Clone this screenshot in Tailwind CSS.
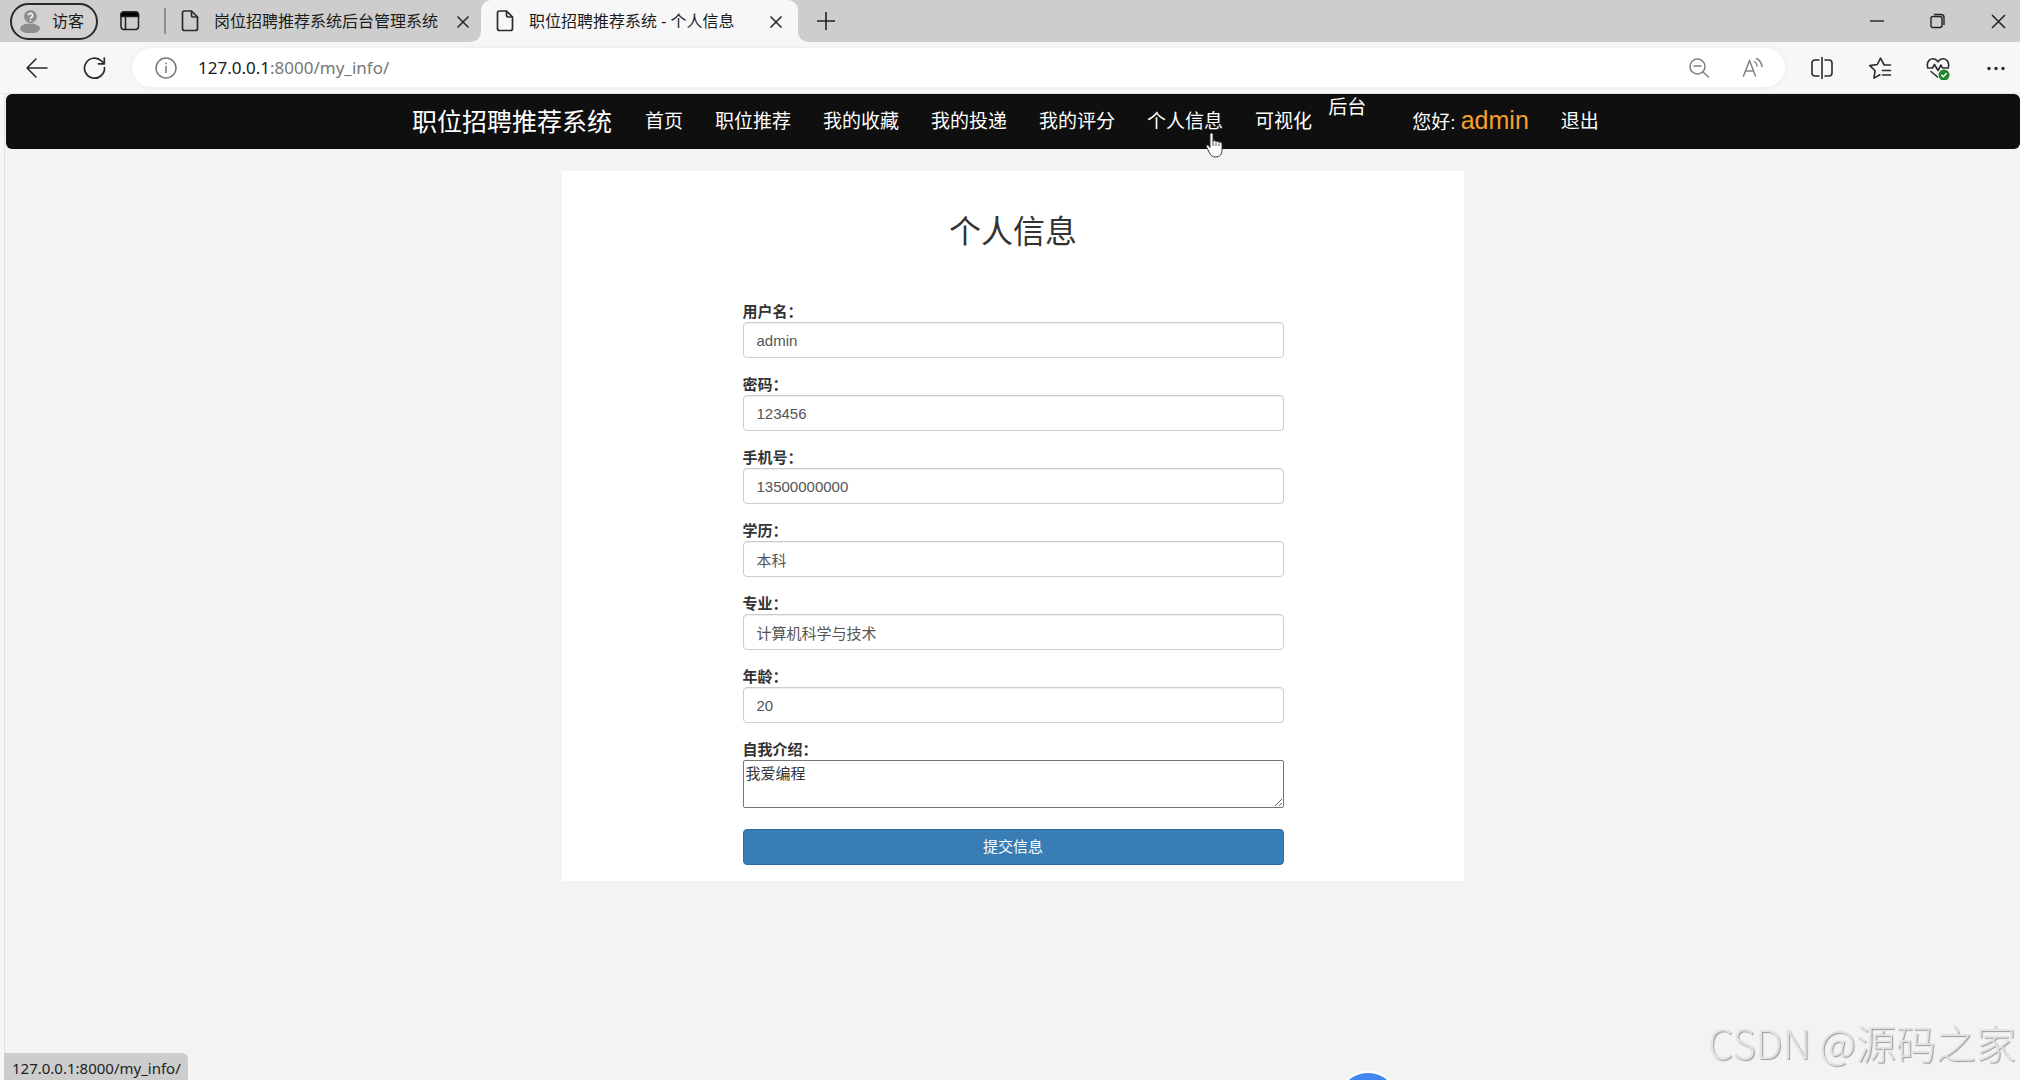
<!DOCTYPE html>
<html lang="zh-CN">
<head>
<meta charset="utf-8">
<meta name="viewport" content="width=device-width, initial-scale=1">
<title>职位招聘推荐系统 - 个人信息</title>
<script src="https://cdn.jsdelivr.net/npm/@tailwindcss/browser@4"></script>
</head>
<body class="flex min-h-screen flex-col bg-[#f7f7f7] font-['Liberation_Sans','Noto_Sans_CJK_SC',sans-serif] text-[#333]">

<!-- Browser chrome -->
<header class="font-['Noto_Sans','Noto_Sans_CJK_SC',sans-serif] text-[#1b1b1b]">
  <div class="flex h-[42px] items-center bg-[#cdcdcd] text-base leading-6">
    <button class="ml-2.5 flex h-[37px] w-[88px] items-center gap-2.5 rounded-full border-2 border-[#2a2a2a] bg-[#d3d1cf] pl-1.5">
      <svg class="size-6" viewBox="0 0 24 24"><circle cx="12.500" cy="7.500" r="6.500" fill="#8e8e8e"/><ellipse cx="12" cy="19.500" rx="10" ry="5" fill="#8e8e8e"/><path d="M10.400 6.300a2.100 2.100 0 1 1 3 1.900c-.8.4-.9.8-.9 1.500M12.500 11v1" stroke="#fff" stroke-width="1.500" fill="none"/></svg>
      <span>访客</span>
    </button>
    <button class="ml-5 size-6" aria-label="标签页操作">
      <svg class="size-6" viewBox="0 0 24 24" fill="none" stroke="#1f1f1f" stroke-width="1.500"><rect x="3" y="3" width="17.500" height="17.500" rx="3"/><path d="M3 6a3 3 0 0 1 3-3h11.500a3 3 0 0 1 3 3v1.500H3z" fill="#000"/><path d="M7.500 8v12"/></svg>
    </button>
    <span class="ml-[22px] h-[26px] w-0.5 bg-[#8f8f8f]"></span>
    <div class="flex h-full w-[315px] items-center pl-3">
      <svg class="size-6 shrink-0" viewBox="0 0 24 24" fill="none" stroke="#2b2b2b" stroke-width="1.700" stroke-linejoin="round"><path d="M6.500 2h7l6 6v11.500a2 2 0 0 1-2 2h-11a2 2 0 0 1-2-2V4a2 2 0 0 1 2-2z"/><path d="M13.500 2v4.500a1.500 1.500 0 0 0 1.500 1.500h4.500"/></svg>
      <span class="ml-3 whitespace-nowrap">岗位招聘推荐系统后台管理系统</span>
      <button class="mr-2 ml-auto size-5" aria-label="关闭标签页"><svg class="size-5" viewBox="0 0 20 20" stroke="#2b2b2b" stroke-width="1.600"><path d="M4.500 5.500l11 11M15.500 5.500l-11 11"/></svg></button>
    </div>
    <div class="relative flex h-full w-[317px] items-center rounded-t-[10px] bg-[#f7f7f7] pl-3">
      <svg class="absolute bottom-0 -left-2.5 size-2.5" viewBox="0 0 10 10"><path d="M10 0v10H0A10 10 0 0 0 10 0z" fill="#f7f7f7"/></svg>
      <svg class="absolute -right-2.5 bottom-0 size-2.5" viewBox="0 0 10 10"><path d="M0 0v10h10A10 10 0 0 1 0 0z" fill="#f7f7f7"/></svg>
      <svg class="size-6 shrink-0" viewBox="0 0 24 24" fill="none" stroke="#2b2b2b" stroke-width="1.700" stroke-linejoin="round"><path d="M6.500 2h7l6 6v11.500a2 2 0 0 1-2 2h-11a2 2 0 0 1-2-2V4a2 2 0 0 1 2-2z"/><path d="M13.500 2v4.500a1.500 1.500 0 0 0 1.500 1.500h4.500"/></svg>
      <span class="ml-3 whitespace-nowrap">职位招聘推荐系统 - 个人信息</span>
      <button class="mr-3 ml-auto size-5" aria-label="关闭标签页"><svg class="size-5" viewBox="0 0 20 20" stroke="#2b2b2b" stroke-width="1.600"><path d="M4.500 5.500l11 11M15.500 5.500l-11 11"/></svg></button>
    </div>
    <button class="ml-4 size-6" aria-label="新建标签页"><svg class="size-6" viewBox="0 0 24 24" stroke="#222" stroke-width="1.600"><path d="M12 3v18M3 12h18"/></svg></button>
    <div class="mr-3 ml-auto flex gap-10">
      <button class="size-5" aria-label="最小化"><svg class="size-5" viewBox="0 0 20 20" stroke="#222" stroke-width="1.400"><path d="M2 10h14"/></svg></button>
      <button class="size-5" aria-label="还原"><svg class="size-5" viewBox="0 0 20 20" fill="none" stroke="#222" stroke-width="1.400"><rect x="3" y="5.500" width="11" height="11" rx="2"/><path d="M6 3.500h7a3 3 0 0 1 3 3V14"/></svg></button>
      <button class="size-5" aria-label="关闭"><svg class="size-5" viewBox="0 0 20 20" stroke="#222" stroke-width="1.500"><path d="M4 4l13 13M17 4L4 17"/></svg></button>
    </div>
  </div>

  <div class="flex h-[52px] items-center border-b border-[#e4e4e4] pr-2 pl-6">
    <button class="size-6" aria-label="后退"><svg class="size-6" viewBox="0 0 24 24" fill="none" stroke="#2b2b2b" stroke-width="1.600" stroke-linecap="round" stroke-linejoin="round"><path d="M23 12H3M12 3l-9 9 9 9"/></svg></button>
    <button class="ml-[35px] size-6" aria-label="刷新"><svg class="size-6" viewBox="0 0 24 24" fill="none" stroke="#2b2b2b" stroke-width="1.700" stroke-linecap="round" stroke-linejoin="round"><path d="M21.500 11.500A10 10 0 1 1 18.500 5l2.500 2.500M21.300 2v5.800h-5.800"/></svg></button>
    <div class="ml-[25px] flex h-[39px] flex-1 items-center rounded-full bg-white pr-5 pl-[22px] shadow-[0_0_5px_#e8e8e8]">
      <svg class="size-6" viewBox="0 0 24 24" fill="none" stroke="#777" stroke-width="1.500"><circle cx="12" cy="12" r="10"/><path d="M12 10v7M12 6.500v1.800"/></svg>
      <a href="#" class="ml-5 text-[17px] leading-6 whitespace-nowrap text-[#777]"><span class="text-[#1b1b1b]">127.0.0.1</span>:8000/my_info/</a>
      <button class="ml-auto size-6" aria-label="缩放"><svg class="size-6" viewBox="0 0 24 24" fill="none" stroke="#808080" stroke-width="1.500" stroke-linecap="round"><circle cx="10.500" cy="10.500" r="7.500"/><path d="M16 16l5.500 5M7 10h7"/></svg></button>
      <button class="ml-[30px] size-6" aria-label="朗读此页"><svg class="size-6" viewBox="0 0 24 24" fill="none" stroke="#808080" stroke-width="1.500" stroke-linecap="round" stroke-linejoin="round"><path d="M2.500 20L8.500 4.500 14.500 20M4.500 15h8M13.500 5.500c1.500 1 2.300 2.500 2.500 4.500M15.500 2.500c3 1.500 5 4.500 5.500 8"/></svg></button>
    </div>
    <div class="ml-[21px] flex gap-[26px] text-[#2b2b2b]">
      <button class="flex size-8 items-center justify-center" aria-label="分屏"><svg class="size-6" viewBox="0 0 24 24" fill="none" stroke="currentColor" stroke-width="1.600" stroke-linecap="round"><path d="M12 1.500v21M9 4H5a3 3 0 0 0-3 3v10a3 3 0 0 0 3 3h4M15 4h4a3 3 0 0 1 3 3v10a3 3 0 0 1-3 3h-4"/></svg></button>
      <button class="flex size-8 items-center justify-center" aria-label="收藏夹"><svg class="size-6" viewBox="0 0 24 24" fill="none" stroke="currentColor" stroke-width="1.600" stroke-linecap="round" stroke-linejoin="round"><path d="M22.500 9h-6.300L12.500 2.200 9.300 8.500 1.800 9.600l5.300 5.200-1.200 7.300 6-3.300M14.500 14.500h8M14.500 19h8"/></svg></button>
      <button class="flex size-8 items-center justify-center" aria-label="浏览器概要"><svg class="size-6" viewBox="0 0 24 24" fill="none" stroke="currentColor" stroke-width="1.600" stroke-linecap="round" stroke-linejoin="round"><path d="M1.500 10.500C.5 5 5 1.500 9 3.200c1.500.6 2.400 1.500 3 2.600.6-1.100 1.500-2 3-2.600 4-1.700 8.500 1.800 7.500 7.300M1.500 12h5l2-3.500 3.500 6 3-5.500 1.500 3h6M5 15.500l6.500 5.500"/><circle cx="18" cy="19" r="5.500" fill="#23862b" stroke="none"/><path d="M15.800 19.200l1.500 1.500 3-3.200" stroke="#fff" stroke-width="1.400"/></svg></button>
      <button class="flex size-8 items-center justify-center" aria-label="设置及其他"><svg class="size-6" viewBox="0 0 24 24" fill="currentColor"><circle cx="5" cy="12.500" r="1.700"/><circle cx="12" cy="12.500" r="1.700"/><circle cx="19" cy="12.500" r="1.700"/></svg></button>
    </div>
  </div>
</header>

<!-- Site -->
<div class="ml-1 flex-1 border-l border-[#e2e2e2] bg-[#f3f3f3] pl-px">
  <nav class="h-[55px] rounded-md bg-[#0f0f0f] text-white">
    <div class="mx-auto flex h-full max-w-[1202px] items-center gap-[33px] whitespace-nowrap">
      <a href="#" class="text-[25px] leading-7">职位招聘推荐系统</a>
      <ul class="flex h-full flex-1 items-center gap-8 text-[19px] leading-7">
        <li><a href="#">首页</a></li>
        <li><a href="#">职位推荐</a></li>
        <li><a href="#">我的收藏</a></li>
        <li><a href="#">我的投递</a></li>
        <li><a href="#">我的评分</a></li>
        <li class="relative"><a href="#">个人信息</a>
          <svg class="absolute top-6 left-[58px] z-10 h-[26px] w-5" viewBox="0 0 20 26"><path d="M5 2.500C5 .6 8 .6 8 2.500v7c.3-1.400 2.900-1.200 3 .5.500-1.200 2.800-1 3 .7.700-1.100 3-.7 3 1.300v6c0 4-2 7-6.500 7-3.500 0-5-2-6.200-4.500L1.500 15c-.8-1.800 1-2.700 2.200-1.300L5 15.500z" fill="#fff" stroke="#333" stroke-width="1"/><path d="M8 9.500V14M11 10.500V14M14 11.500V14" stroke="#333" stroke-width=".9"/></svg>
        </li>
        <li><a href="#">可视化</a></li>
        <li class="-ml-4 self-start"><a href="#">后台</a></li>
        <li class="ml-3.5"><a href="#">您好: <span class="text-[25px] text-[#f5a12c]">admin</span></a></li>
        <li><a href="#">退出</a></li>
      </ul>
    </div>
  </nav>

  <main class="mx-auto mt-[22px] max-w-[902px] bg-white px-4 pt-[37px] pb-4">
    <h1 class="text-center text-[32px] leading-[48px]">个人信息</h1>
    <form class="mx-auto mt-[45px] flex max-w-[541px] flex-col gap-4 text-[15px]">
      <div>
        <label for="username" class="block leading-[21px] font-bold">用户名：</label>
        <input id="username" type="text" value="admin" class="block h-9 w-full rounded border border-[#ccc] px-[13px] text-[#555] shadow-[inset_0_1px_1px_#eee]">
      </div>
      <div>
        <label for="password" class="block leading-[21px] font-bold">密码：</label>
        <input id="password" type="text" value="123456" class="block h-9 w-full rounded border border-[#ccc] px-[13px] text-[#555] shadow-[inset_0_1px_1px_#eee]">
      </div>
      <div>
        <label for="phone" class="block leading-[21px] font-bold">手机号：</label>
        <input id="phone" type="text" value="13500000000" class="block h-9 w-full rounded border border-[#ccc] px-[13px] text-[#555] shadow-[inset_0_1px_1px_#eee]">
      </div>
      <div>
        <label for="education" class="block leading-[21px] font-bold">学历：</label>
        <input id="education" type="text" value="本科" class="block h-9 w-full rounded border border-[#ccc] px-[13px] text-[#555] shadow-[inset_0_1px_1px_#eee]">
      </div>
      <div>
        <label for="major" class="block leading-[21px] font-bold">专业：</label>
        <input id="major" type="text" value="计算机科学与技术" class="block h-9 w-full rounded border border-[#ccc] px-[13px] text-[#555] shadow-[inset_0_1px_1px_#eee]">
      </div>
      <div>
        <label for="age" class="block leading-[21px] font-bold">年龄：</label>
        <input id="age" type="text" value="20" class="block h-9 w-full rounded border border-[#ccc] px-[13px] text-[#555] shadow-[inset_0_1px_1px_#eee]">
      </div>
      <div>
        <label for="intro" class="block leading-[21px] font-bold">自我介绍：</label>
        <textarea id="intro" class="block h-12 w-full resize rounded-xs border border-[#767676] px-0.5 py-0.5 leading-[21px]">我爱编程</textarea>
      </div>
      <button type="submit" class="mt-[5px] h-9 rounded border border-[#2e6da4] bg-[#387db3] text-white">提交信息</button>
    </form>
  </main>
</div>

<!-- Overlays along the bottom edge -->
<div class="fixed bottom-0 left-1 h-[27px] w-[184px] rounded-tr-md bg-[#cdcdcd] pl-2 font-['Noto_Sans',sans-serif] text-[15px] leading-[31px] whitespace-nowrap text-[#222]">127.0.0.1:8000/my_info/</div>
<div class="fixed -bottom-[55px] left-[1336px] size-16 rounded-full border-2 border-white bg-[#4287f0]"></div>
<div class="fixed right-1 bottom-2.5 font-['Noto_Sans_CJK_SC',sans-serif] text-[40px] leading-[56px] font-light whitespace-nowrap text-[#e2e2e2] [text-shadow:1px_1px_1px_#999]">CSDN @源码之家</div>
</body>
</html>
